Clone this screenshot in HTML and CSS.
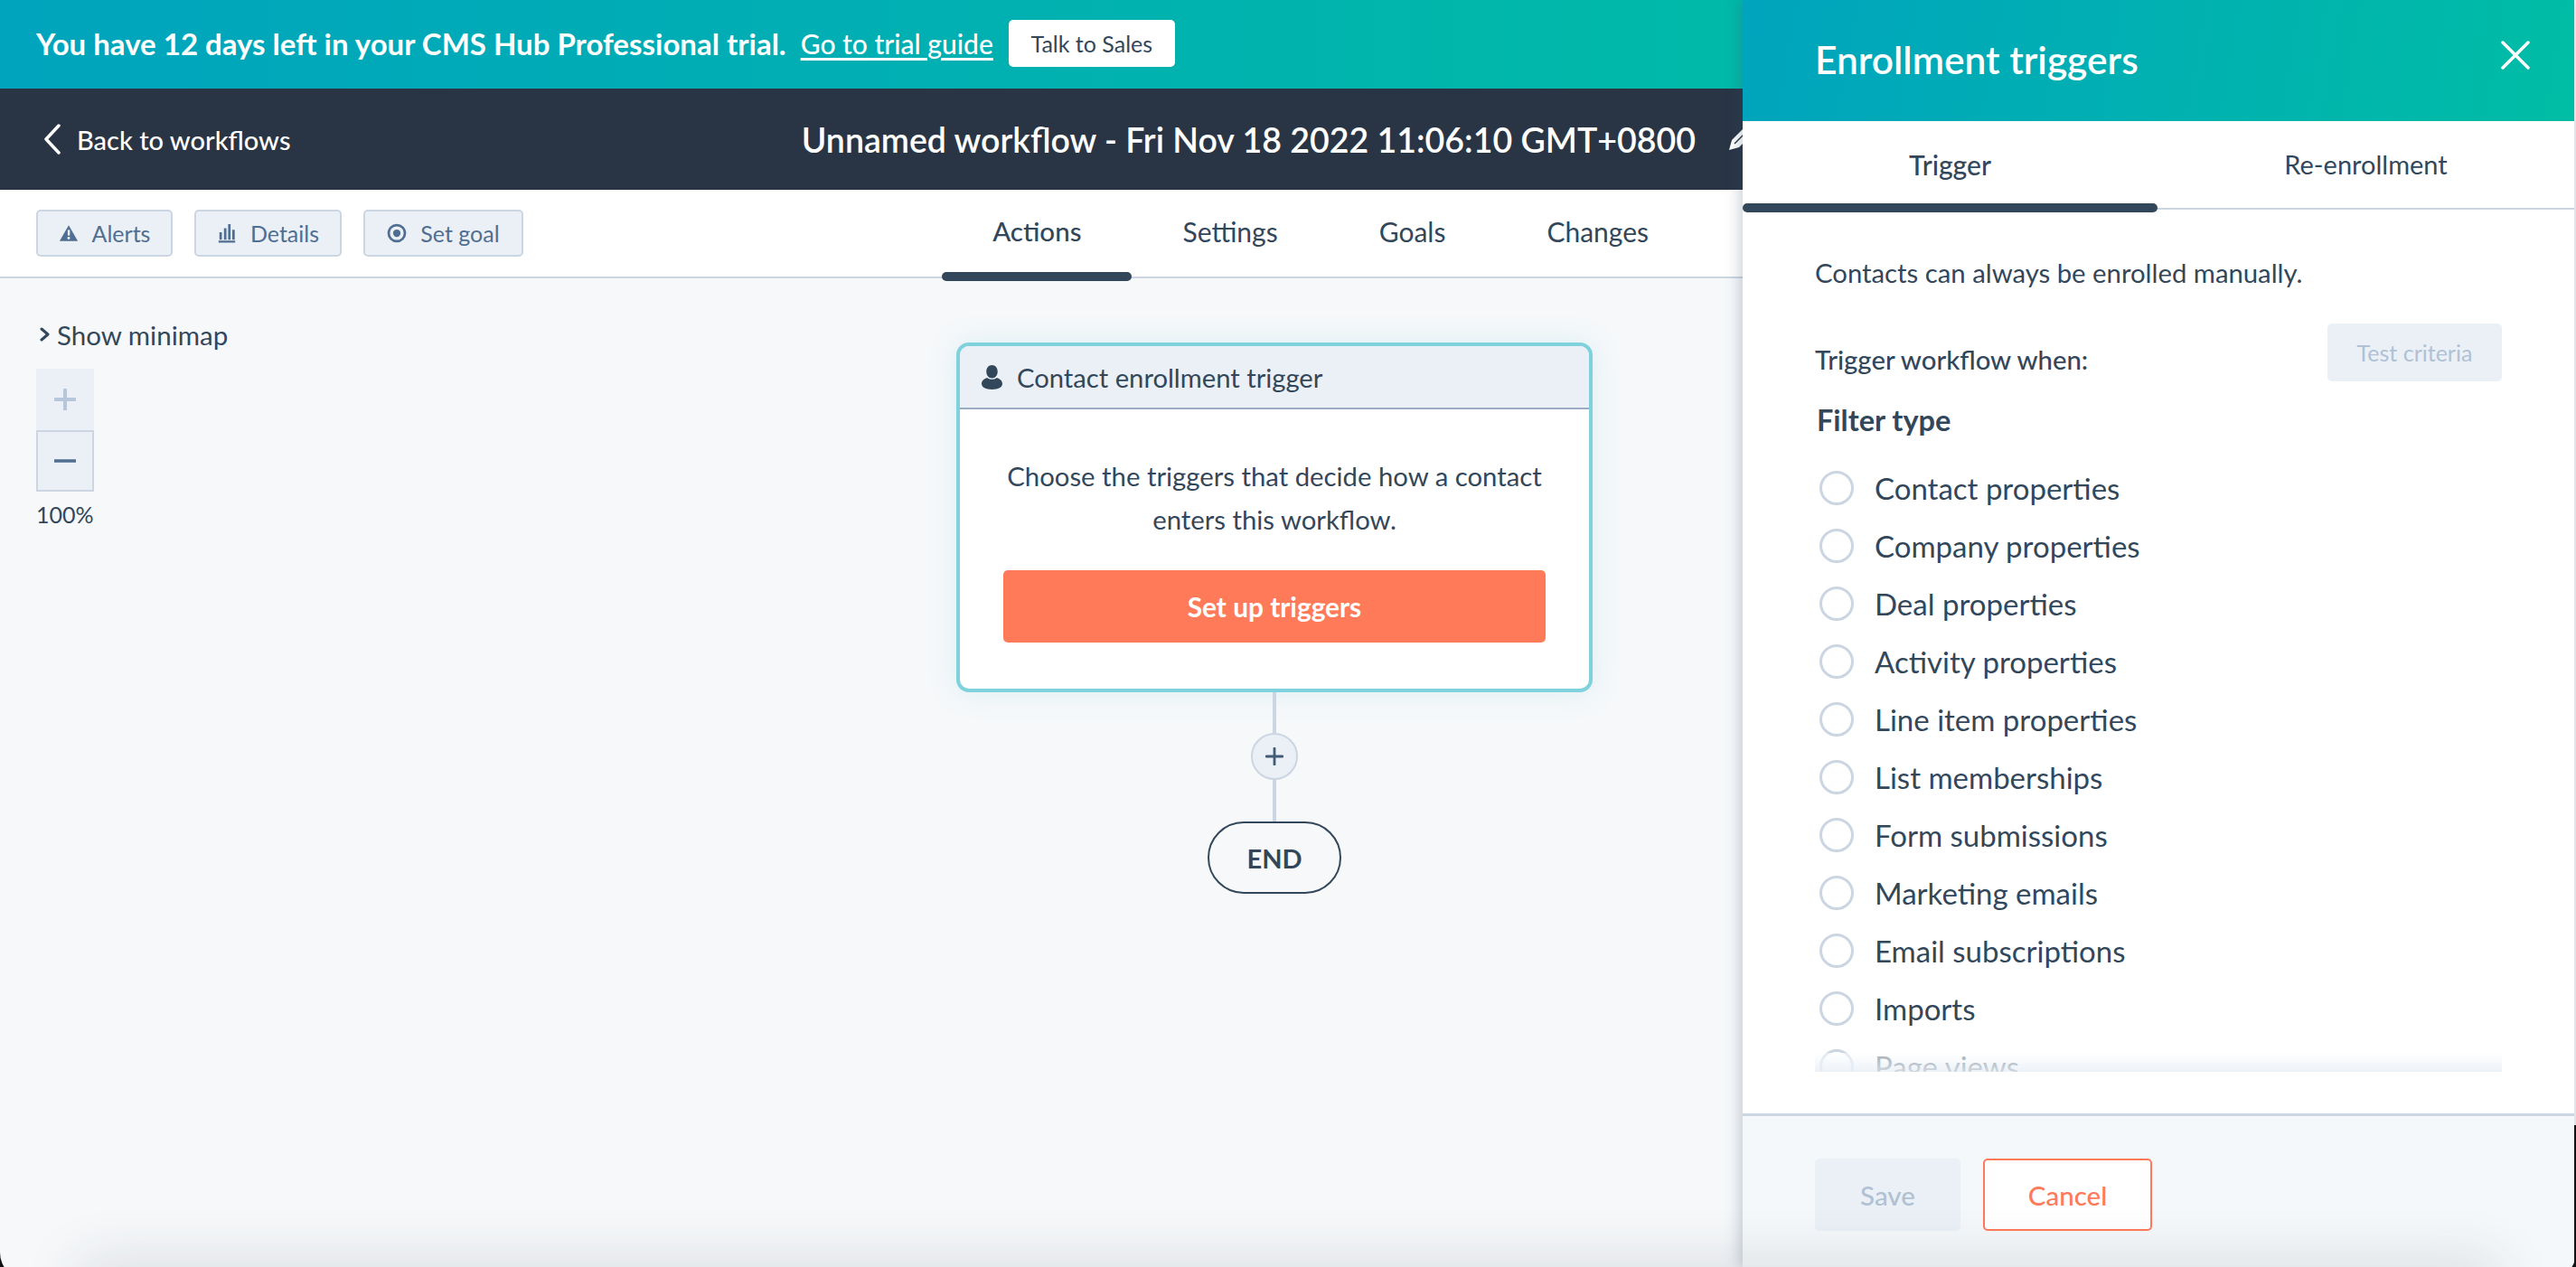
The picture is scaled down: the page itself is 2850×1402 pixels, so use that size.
FILE: index.html
```html
<!DOCTYPE html>
<html lang="en">
<head>
<meta charset="utf-8">
<title>Unnamed workflow</title>
<link rel="stylesheet" href="styles.css">
</head>
<body>
<div class="app">
  <main class="main">
    <div class="trial">
      <strong class="trial-text">You have 12 days left in your CMS Hub Professional trial.</strong>
      <a class="trial-link" href="#">Go to trial guide</a>
      <button class="trial-btn">Talk to Sales</button>
    </div>
    <header class="head">
      <a class="back" href="#">
        <svg class="back-icon" viewBox="0 0 20 34"><path d="M17 2 3 17l14 15"/></svg>
        Back to workflows
      </a>
      <h1 class="title">Unnamed workflow - Fri Nov 18 2022 11:06:10 GMT+0800</h1>
      <svg class="pencil" viewBox="0 0 24 24"><path d="M0 24 3 13 15 1l8 8-12 12z"/><path class="pencil-cut" d="M6 17 17 6"/></svg>
    </header>
    <nav class="subnav">
      <div class="tools">
        <button class="tool tool-alerts">
          <svg class="tool-icon" viewBox="0 0 24 22"><path class="tri" d="M12 1.5 23 20.5H1z"/><rect class="cut" x="10.8" y="7" width="2.6" height="7" rx="1"/><circle class="cut" cx="12" cy="17" r="1.6"/></svg>
          Alerts
        </button>
        <button class="tool tool-details">
          <svg class="tool-icon" viewBox="0 0 20 24"><path class="tri" d="M0 21h20v2.500H0zM1 11h3v9H1zM6.500 6h3v14h-3zM11.500 1h3v19h-3zM16.500 8h3v12h-3z"/></svg>
          Details
        </button>
        <button class="tool tool-goal">
          <svg class="tool-icon" viewBox="0 0 24 24"><circle class="ring" cx="12" cy="12" r="9.800"/><circle class="tri" cx="12" cy="12" r="4.500"/></svg>
          Set goal
        </button>
      </div>
      <div class="tabs">
        <a class="tab tab-on" href="#">Actions</a>
        <a class="tab" href="#">Settings</a>
        <a class="tab" href="#">Goals</a>
        <a class="tab" href="#">Changes</a>
      </div>
    </nav>
    <section class="canvas">
      <div class="map-side">
        <div class="minimap"><svg class="chev" viewBox="0 0 12 16"><path d="M2 2l7 6-7 6"/></svg>Show minimap</div>
        <div class="zoomer">
          <button class="zoom-btn zoom-off"><svg viewBox="0 0 24 24"><path d="M12 1v22M1 12h22"/></svg></button>
          <button class="zoom-btn zoom-on"><svg viewBox="0 0 26 24"><path d="M1 12h24"/></svg></button>
        </div>
        <div class="pct">100%</div>
      </div>
      <div class="flow">
        <article class="card">
          <div class="card-head">
            <svg class="person" viewBox="0 0 24 28"><path d="M12 0c4 0 6.500 3.300 6.500 7.500S16 15 12 15 5.500 11.700 5.500 7.500 8 0 12 0zM6.500 14.500C8 17 16 17 17.500 14.500 21 15.500 24 18 24 21.500 24 25.500 19 28 12 28S0 25.500 0 21.500C0 18 3 15.500 6.500 14.500z"/></svg>
            Contact enrollment trigger
          </div>
          <div class="card-body">
            <p class="card-text">Choose the triggers that decide how a contact enters this workflow.</p>
            <button class="cta">Set up triggers</button>
          </div>
        </article>
        <div class="line line-a"></div>
        <button class="add"><svg viewBox="0 0 20 20"><path d="M10 1v18M1 10h18"/></svg></button>
        <div class="line line-b"></div>
        <div class="end">END</div>
      </div>
    </section>
  </main>
  <aside class="panel">
    <div class="panel-head">
      <h2 class="panel-title">Enrollment triggers</h2>
      <svg class="close" viewBox="0 0 32 32"><path d="M2 2l28 28M30 2 2 30"/></svg>
    </div>
    <div class="panel-tabs">
      <a class="ptab ptab-on" href="#">Trigger</a>
      <a class="ptab" href="#">Re-enrollment</a>
    </div>
    <div class="panel-body">
      <p class="note">Contacts can always be enrolled manually.</p>
      <div class="when-row">
        <span class="when">Trigger workflow when:</span>
        <button class="test">Test criteria</button>
      </div>
      <div class="filter">
        <h3 class="filter-title">Filter type</h3>
        <ul class="radios">
          <li class="radio"><span class="dot"></span>Contact properties</li>
          <li class="radio"><span class="dot"></span>Company properties</li>
          <li class="radio"><span class="dot"></span>Deal properties</li>
          <li class="radio"><span class="dot"></span>Activity properties</li>
          <li class="radio"><span class="dot"></span>Line item properties</li>
          <li class="radio"><span class="dot"></span>List memberships</li>
          <li class="radio"><span class="dot"></span>Form submissions</li>
          <li class="radio"><span class="dot"></span>Marketing emails</li>
          <li class="radio"><span class="dot"></span>Email subscriptions</li>
          <li class="radio"><span class="dot"></span>Imports</li>
          <li class="radio"><span class="dot"></span>Page views</li>
        </ul>
        <div class="fade"></div>
      </div>
    </div>
    <div class="panel-foot">
      <button class="save">Save</button>
      <button class="cancel">Cancel</button>
    </div>
  </aside>
</div>
<div class="bottom-glow"></div>
<div class="corners"></div>
<div class="edge"></div>
</body>
</html>
```
FILE: styles.css
```css
* { box-sizing: border-box; }
html, body { margin: 0; height: 100%; }
body {
  position: relative;
  width: 2850px;
  height: 1402px;
  overflow: hidden;
  background: #eceef1;
  font-family: Lato, "Open Sans", sans-serif;
  color: #33475b;
}
button { font-family: inherit; cursor: pointer; }
a { color: inherit; text-decoration: none; }
h1, h2, h3, p, ul { margin: 0; padding: 0; }

.app { display: flex; width: 2848px; height: 1402px; }
.main { width: 1928px; flex: none; display: flex; flex-direction: column; background: #f6f8fa; overflow: hidden; }

.trial {
  height: 98px;
  flex: none;
  display: flex;
  align-items: center;
  padding: 0 0 2px 40px;
  background: linear-gradient(90deg, #00a4bd 0%, #00bda5 115%);
  color: #fff;
}
.trial-text { font-size: 33px; font-weight: 700; white-space: nowrap; }
.trial-link { margin-left: 16px; font-size: 30px; font-weight: 500; text-decoration: underline; text-underline-offset: 4px; white-space: nowrap; }
.trial-btn {
  margin-left: 17px;
  width: 184px;
  height: 52px;
  border: 0;
  border-radius: 5px;
  background: #fff;
  color: #33475b;
  font-size: 25px;
}

.head {
  height: 112px;
  flex: none;
  display: flex;
  align-items: center;
  padding-left: 48px;
  background: #293545;
  color: #fff;
}
.back { display: flex; align-items: center; gap: 17px; font-size: 29px; font-weight: 500; }
.back-icon { width: 20px; height: 34px; fill: none; stroke: #fff; stroke-width: 3.500; stroke-linecap: round; stroke-linejoin: round; }
.title { margin-left: auto; font-size: 37.5px; font-weight: 600; white-space: nowrap; }
.pencil { flex: none; width: 24px; height: 24px; margin-left: 37px; margin-right: -9px; fill: #fff; }
.pencil-cut { fill: none; stroke: #293545; stroke-width: 1.500; }

.subnav {
  height: 98px;
  flex: none;
  display: flex;
  justify-content: space-between;
  padding: 0 48px 0 40px;
  background: #fff;
  border-bottom: 2px solid #cbd6e2;
}
.tools { display: flex; gap: 24px; padding-top: 22px; }
.tool {
  height: 52px;
  display: flex;
  align-items: center;
  justify-content: center;
  gap: 15px;
  padding: 0;
  border: 2px solid #cbd6e2;
  border-radius: 5px;
  background: #eaf0f6;
  color: #506e91;
  font-size: 25px;
}
.tool-alerts { width: 151px; }
.tool-details { width: 163px; }
.tool-goal { width: 177px; }
.tool-icon { width: 22px; height: 22px; }
.tri { fill: #506e91; }
.cut { fill: #eaf0f6; }
.ring { fill: none; stroke: #506e91; stroke-width: 3; }
.tabs { display: flex; }
.tab { position: relative; padding: 28px 56px 0; font-size: 30px; }
.tab-on { font-size: 29.500px; font-weight: 500; }
.tab-on::after {
  content: "";
  position: absolute;
  left: 0;
  right: 0;
  bottom: -5px;
  height: 10px;
  border-radius: 5px;
  background: #33475b;
}

.canvas { flex: 1; display: flex; padding-left: 40px; }
.map-side { width: 960px; flex: none; padding-top: 45px; }
.minimap { display: flex; align-items: center; gap: 7px; margin-left: 4px; height: 34px; font-size: 29.500px; white-space: nowrap; }
.chev { width: 12px; height: 16px; fill: none; stroke: #33475b; stroke-width: 3; stroke-linecap: round; stroke-linejoin: round; }
.zoomer { display: flex; flex-direction: column; width: 64px; margin-top: 21px; }
.zoom-btn { width: 64px; height: 68px; display: flex; align-items: center; justify-content: center; padding: 0; background: #eaf0f6; border: 2px solid #eaf0f6; }
.zoom-btn svg { width: 24px; height: 24px; fill: none; stroke-linecap: round; stroke-width: 4; }
.zoom-off svg { stroke: #b6c7dc; }
.zoom-on { border-color: #cbd6e2; }
.zoom-on svg { stroke: #506e91; }
.pct { margin-top: 10px; font-size: 25px; line-height: 30px; }

.flow { width: 704px; flex: none; margin-left: 58px; padding-top: 71px; display: flex; flex-direction: column; align-items: center; }
.card {
  width: 704px;
  height: 387px;
  flex: none;
  border: 4px solid #7fd1de;
  border-radius: 14px;
  background: #fff;
  overflow: hidden;
  box-shadow: 0 0 30px rgba(127, 209, 222, 0.22);
}
.card-head {
  height: 70px;
  display: flex;
  align-items: center;
  gap: 16px;
  padding-left: 24px;
  background: #eaf0f6;
  border-bottom: 2px solid #99acc2;
  font-size: 29.200px;
}
.person { width: 23px; height: 27px; fill: #33475b; }
.card-body { padding: 50px 48px 0; text-align: center; }
.card-text { font-size: 29.300px; line-height: 48px; }
.cta {
  display: block;
  width: 600px;
  height: 80px;
  margin-top: 32px;
  border: 0;
  border-radius: 5px;
  background: #ff7a59;
  color: #fff;
  font-size: 29.800px;
  font-weight: 700;
}
.line { width: 4px; background: #cbd6e2; flex: none; }
.line-a { height: 45px; }
.line-b { height: 46px; }
.add {
  width: 52px;
  height: 52px;
  flex: none;
  display: flex;
  align-items: center;
  justify-content: center;
  padding: 0;
  border: 2px solid #cbd6e2;
  border-radius: 50%;
  background: #eaf0f6;
}
.add svg { width: 20px; height: 20px; fill: none; stroke: #425b76; stroke-width: 2.800; stroke-linecap: round; }
.end {
  width: 148px;
  height: 80px;
  flex: none;
  display: flex;
  align-items: center;
  justify-content: center;
  border: 2px solid #33475b;
  border-radius: 40px;
  font-size: 29px;
  font-weight: 700;
}

.panel { width: 920px; flex: none; display: flex; flex-direction: column; background: #fff; box-shadow: -4px 0 14px rgba(60, 80, 110, 0.25); position: relative; }
.panel-head {
  height: 134px;
  flex: none;
  display: flex;
  align-items: center;
  justify-content: space-between;
  padding: 0 49px 0 80px;
  background: linear-gradient(100deg, #00a4bd 0%, #00bda5 100%);
  color: #fff;
}
.panel-title { font-size: 42.500px; font-weight: 600; margin-top: -4px; }
.close { width: 32px; height: 32px; margin-top: -12px; fill: none; stroke: #fff; stroke-width: 3.500; stroke-linecap: round; }
.panel-tabs { height: 98px; flex: none; display: flex; border-bottom: 2px solid #cbd6e2; }
.ptab { position: relative; padding-top: 30px; text-align: center; font-size: 29px; }
.ptab:first-child { width: 459px; font-size: 30px; font-weight: 500; }
.ptab:last-child { flex: 1; }
.ptab-on::after {
  content: "";
  position: absolute;
  left: 0;
  right: 0;
  bottom: -5px;
  height: 10px;
  border-radius: 5px;
  background: #33475b;
}
.panel-body { flex: 1; padding: 52px 80px 0; min-height: 0; overflow: hidden; }
.note { font-size: 29.300px; line-height: 36px; }
.when-row { display: flex; justify-content: space-between; align-items: flex-start; margin-top: 38px; }
.when { margin-top: 22px; font-size: 29.300px; line-height: 36px; font-weight: 500; }
.test {
  width: 193px;
  height: 64px;
  border: 0;
  border-radius: 5px;
  background: #eaf0f6;
  color: #b0c1d4;
  font-size: 25px;
}
.filter { position: relative; height: 764px; overflow: hidden; }
.filter-title { padding-left: 2px; margin-top: 21px; font-size: 32.500px; line-height: 44px; font-weight: 700; }
.radios { list-style: none; margin-top: 21px; }
.radio { display: flex; align-items: center; gap: 23px; height: 64px; padding-left: 5px; font-size: 33px; white-space: nowrap; }
.dot { width: 38px; height: 38px; flex: none; border: 3px solid #cbd6e2; border-radius: 50%; }
.fade { position: absolute; left: 0; right: 0; bottom: 0; height: 21px; background: linear-gradient(rgba(255,255,255,.55), rgba(234,240,246,.85)); }
.panel-foot {
  height: 170px;
  flex: none;
  display: flex;
  gap: 25px;
  padding: 47px 80px 0;
  background: #f5f8fa;
  border-top: 3px solid #cbd6e2;
}
.save, .cancel { height: 80px; border-radius: 5px; font-size: 29.500px; font-weight: 500; }
.save { width: 161px; border: 0; background: #eaf0f6; color: #b0c1d4; }
.cancel { width: 187px; border: 2px solid #ff7a59; background: #fff; color: #ff7a59; }

.bottom-glow {
  position: absolute;
  left: 90px;
  right: 90px;
  bottom: -30px;
  height: 30px;
  border-radius: 30px;
  box-shadow: 0 0 60px 10px rgba(40, 50, 60, 0.13);
  pointer-events: none;
}
.corners {
  position: absolute;
  left: 0;
  right: 0;
  top: -40px;
  bottom: -14px;
  border-radius: 30px;
  box-shadow: 0 0 0 30px #111;
  pointer-events: none;
}
.edge { position: absolute; right: 0; top: 1245px; bottom: 0; width: 2px; background: #111; }
```
